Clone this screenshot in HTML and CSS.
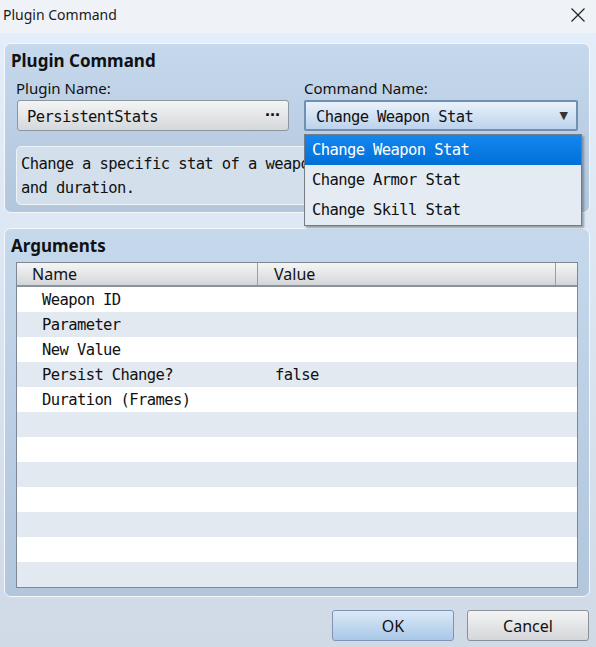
FILE: index.html
```html
<!DOCTYPE html>
<html lang="en">
<head>
  <meta charset="UTF-8">
  <title>Plugin Command</title>
  <link rel="stylesheet" href="styles.css">
</head>
<body>

<!-- Window title -->
<div class="titlebar">
  <span class="title">Plugin Command</span>
  <svg class="close" width="16" height="16" viewBox="0 0 16 16">
    <path d="M1.5 1.5 L14.5 14.5 M14.5 1.5 L1.5 14.5" stroke="#222" stroke-width="1.2" fill="none"/>
  </svg>
</div>

<div class="dialog">

  <!-- Plugin Command group -->
  <div class="group">
    <div class="group-title">Plugin Command</div>
    <div class="pick-row">
      <div class="pick-col">
        <div class="label">Plugin Name:</div>
        <div class="field">
          <span>PersistentStats</span>
          <span class="dots">&middot;&middot;&middot;</span>
        </div>
      </div>
      <div class="pick-col combo-wrap">
        <div class="label">Command Name:</div>
        <div class="combo">
          <span>Change Weapon Stat</span>
          <span class="arrow">&#9660;</span>
        </div>
        <div class="dropdown">
          <div class="option selected">Change Weapon Stat</div>
          <div class="option">Change Armor Stat</div>
          <div class="option">Change Skill Stat</div>
        </div>
      </div>
    </div>
    <div class="description">
      <div class="desc-text">Change a specific stat of a weapon for a set amount<br>and duration.</div>
    </div>
  </div>

  <!-- Arguments group -->
  <div class="group args">
    <div class="group-title">Arguments</div>
    <div class="table">
      <div class="thead">
        <div class="th th-name">Name</div>
        <div class="th th-value">Value</div>
        <div class="th th-fill"></div>
      </div>
      <div class="row"><span class="c-name">Weapon ID</span><span class="c-value"></span></div>
      <div class="row"><span class="c-name">Parameter</span><span class="c-value"></span></div>
      <div class="row"><span class="c-name">New Value</span><span class="c-value"></span></div>
      <div class="row"><span class="c-name">Persist Change?</span><span class="c-value">false</span></div>
      <div class="row"><span class="c-name">Duration (Frames)</span><span class="c-value"></span></div>
      <div class="row"></div>
      <div class="row"></div>
      <div class="row"></div>
      <div class="row"></div>
      <div class="row"></div>
      <div class="row"></div>
      <div class="row"></div>
    </div>
  </div>

  <!-- Buttons -->
  <div class="buttons">
    <button class="btn btn-ok">OK</button>
    <button class="btn">Cancel</button>
  </div>

</div>

</body>
</html>
```

FILE: styles.css
```css
body {
  margin: 0;
  width: 596px;
  height: 647px;
  overflow: hidden;
  font-family: "Noto Sans", "Open Sans", sans-serif;
  font-size: 15px;
  color: #111;
  background: #eff3f8;
}

.titlebar {
  height: 33px;
  display: flex;
  align-items: center;
  justify-content: space-between;
  padding: 0 10px 0 3px;
  background: #eff3f8;
}

.title {
  margin-top: -4px;
  font-size: 14px;
  color: #1a1a1a;
}

.close {
  margin-top: -4px;
}

.dialog {
  height: 614px;
  box-sizing: border-box;
  padding: 10px 6px 0 4px;
  background: linear-gradient(#e4eefa, #cfdae6);
}

.group {
  border: 1px solid #f4f8fc;
  border-radius: 7px;
  background: linear-gradient(#c5d8ec, #b2c6dc);
  padding: 6px 11px 7px 11px;
}

.group-title {
  margin-left: -5px;
  font-weight: bold;
  font-size: 17px;
  line-height: 22px;
}

.pick-row {
  display: grid;
  grid-template-columns: 273px 1fr;
  gap: 15px;
  margin-top: 6px;
}

.label {
  line-height: 20px;
  margin-bottom: 2px;
}

.field,
.combo,
.dropdown,
.description,
.row {
  font-family: "DejaVu Sans Mono", monospace;
  font-size: 15.5px;
  letter-spacing: -0.6px;
}

.field,
.combo {
  height: 31px;
  box-sizing: border-box;
  display: flex;
  align-items: center;
  justify-content: space-between;
  padding-top: 2px;
}

.field {
  margin-left: 1px;
  padding-left: 9px;
  padding-right: 8px;
  border: 1px solid #8d959e;
  border-radius: 3px;
  background: linear-gradient(#f3f4f5, #d5d8db);
}

.dots {
  margin-top: -2px;
  font-family: "Liberation Sans", sans-serif;
  font-weight: bold;
  font-size: 18px;
  letter-spacing: -1px;
}

.combo-wrap {
  position: relative;
}

.combo {
  padding-left: 10px;
  padding-right: 8px;
  border: 2px solid #6f8fb5;
  border-radius: 2px;
  background: linear-gradient(#e9f2fb, #bcd3ec);
}

.arrow {
  margin-top: -2px;
  font-family: "DejaVu Sans", sans-serif;
  font-size: 11px;
  letter-spacing: 0;
  color: #333;
}

.dropdown {
  position: absolute;
  left: 0;
  top: 56px;
  width: 276px;
  border: 1px solid #767c84;
  background: #e4ebf2;
  box-shadow: 2px 2px 2px rgba(60, 70, 85, 0.45);
  z-index: 2;
}

.option {
  height: 30px;
  line-height: 30px;
  padding-left: 7px;
}

.option.selected {
  background: linear-gradient(#1686f0, #0070d8);
  color: #fff;
}

.description {
  margin-top: 15px;
  height: 59px;
  box-sizing: border-box;
  padding: 5px 4px 1px;
  border: 1px solid #eef3f8;
  border-radius: 5px;
  background: #d3dfea;
  line-height: 24px;
}

.desc-text {
  width: 283px;
  white-space: nowrap;
  overflow: hidden;
}

.args {
  margin-top: 15px;
  padding-bottom: 8px;
}

.table {
  margin-top: 5px;
  border: 1px solid #7f8892;
  background: #fff;
}

.thead {
  display: grid;
  grid-template-columns: 241px 298px 1fr;
  height: 22px;
  border-bottom: 2px solid #8b9299;
  background: linear-gradient(#f5f5f5, #d3d6d9);
}

.th {
  line-height: 22px;
  font-size: 16px;
  border-right: 1px solid #9aa0a6;
}

.th-name {
  padding-left: 15px;
}

.th-value {
  padding-left: 16px;
}

.th-fill {
  border-right: none;
}

.row {
  display: grid;
  grid-template-columns: 242px 1fr;
  height: 25px;
  box-sizing: border-box;
  padding-top: 2px;
  line-height: 23px;
}

.row:nth-child(odd) {
  background: #e3e9f0;
}

.c-name {
  padding-left: 25px;
}

.c-value {
  padding-left: 16px;
}

.buttons {
  display: flex;
  justify-content: flex-end;
  gap: 13px;
  margin-top: 13px;
  padding-right: 1px;
}

.btn {
  width: 122px;
  height: 31px;
  border: 1px solid #8a9199;
  border-radius: 3px;
  background: linear-gradient(#f4f4f4, #d4d6d9);
  font-family: "Noto Sans", "Open Sans", sans-serif;
  font-size: 16px;
  color: #111;
}

.btn-ok {
  border-color: #7d95b3;
  background: linear-gradient(#dbe9f8, #a9c8e8);
}
```
